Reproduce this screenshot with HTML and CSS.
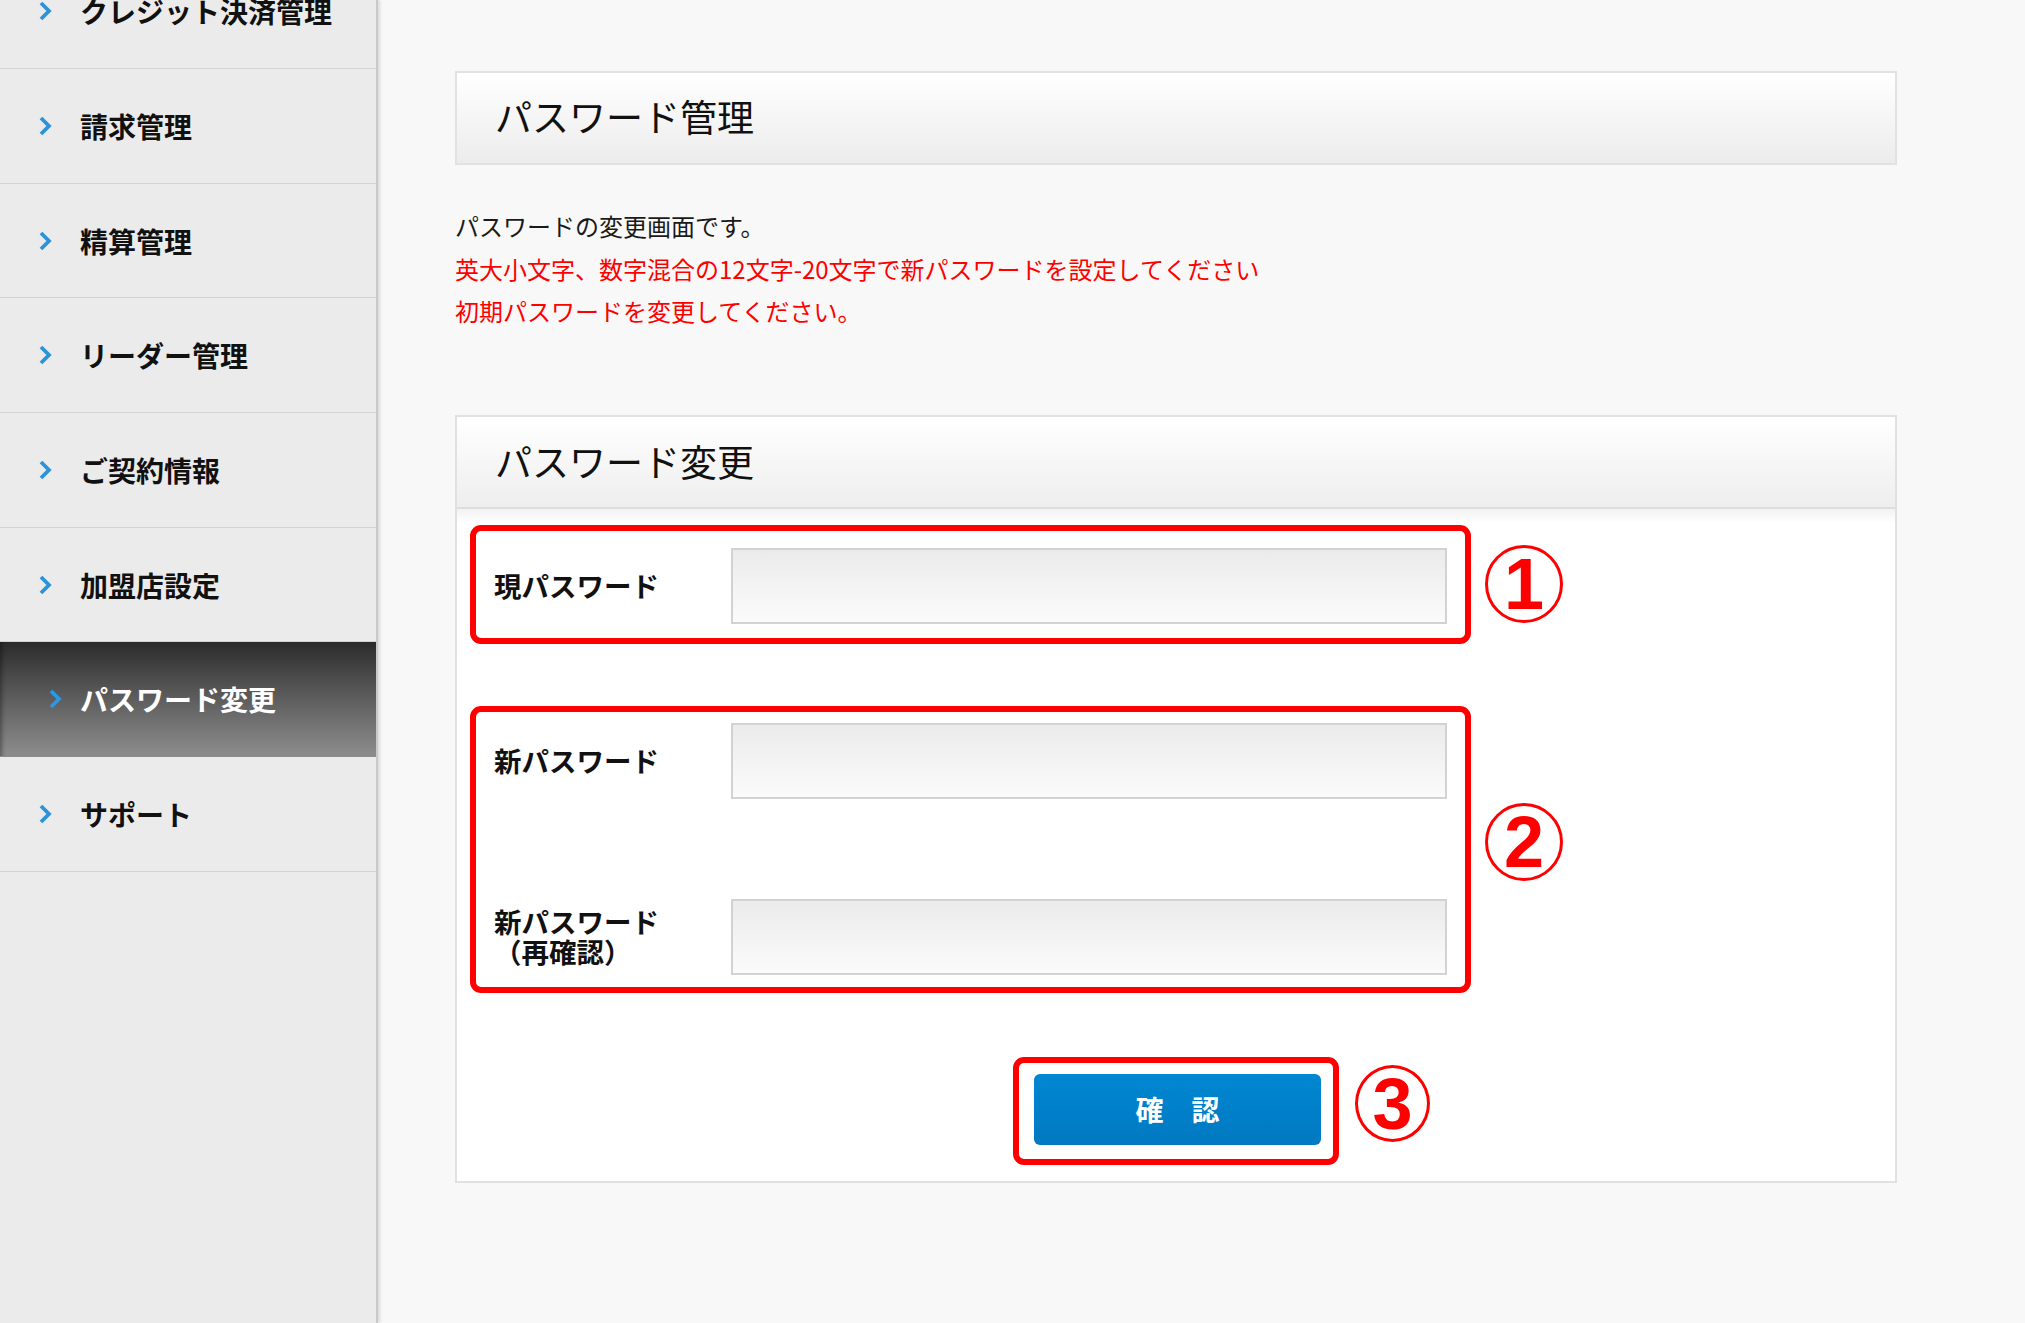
FILE: index.html
```html
<!DOCTYPE html>
<html lang="ja">
<head>
<meta charset="utf-8">
<title>パスワード変更</title>
<link rel="stylesheet" href="styles.css">
</head>
<body>
<div class="page">
  <nav class="sidebar">
    <ul class="menu">
      <li><a class="menu-link" href="#"><svg class="chev" viewBox="0 0 14 22"><polyline points="3,3 11,11 3,19"/></svg><span>クレジット決済管理</span></a></li>
      <li><a class="menu-link" href="#"><svg class="chev" viewBox="0 0 14 22"><polyline points="3,3 11,11 3,19"/></svg><span>請求管理</span></a></li>
      <li><a class="menu-link" href="#"><svg class="chev" viewBox="0 0 14 22"><polyline points="3,3 11,11 3,19"/></svg><span>精算管理</span></a></li>
      <li><a class="menu-link" href="#"><svg class="chev" viewBox="0 0 14 22"><polyline points="3,3 11,11 3,19"/></svg><span>リーダー管理</span></a></li>
      <li><a class="menu-link" href="#"><svg class="chev" viewBox="0 0 14 22"><polyline points="3,3 11,11 3,19"/></svg><span>ご契約情報</span></a></li>
      <li><a class="menu-link" href="#"><svg class="chev" viewBox="0 0 14 22"><polyline points="3,3 11,11 3,19"/></svg><span>加盟店設定</span></a></li>
      <li><a class="menu-link is-active" href="#"><svg class="chev" viewBox="0 0 14 22"><polyline points="3,3 11,11 3,19"/></svg><span>パスワード変更</span></a></li>
      <li><a class="menu-link" href="#"><svg class="chev" viewBox="0 0 14 22"><polyline points="3,3 11,11 3,19"/></svg><span>サポート</span></a></li>
    </ul>
  </nav>

  <main class="main">
    <div class="page-title"><h1>パスワード管理</h1></div>

    <div class="intro">
      <p>パスワードの変更画面です。</p>
      <p class="warn">英大小文字、数字混合の12文字-20文字で新パスワードを設定してください</p>
      <p class="warn">初期パスワードを変更してください。</p>
    </div>

    <section class="panel">
      <h2 class="panel-head">パスワード変更</h2>
      <div class="panel-body">
        <div class="note-row">
          <div class="mark mark-one">
            <div class="field-row">
              <label class="field-label">現パスワード</label>
              <input class="field" type="password">
            </div>
          </div>
          <span class="num">1</span>
        </div>

        <div class="note-row note-row-two">
          <div class="mark mark-two">
            <div class="field-row">
              <label class="field-label">新パスワード</label>
              <input class="field" type="password">
            </div>
            <div class="field-row">
              <label class="field-label">新パスワード<br>（再確認）</label>
              <input class="field" type="password">
            </div>
          </div>
          <span class="num num-up">2</span>
        </div>

        <div class="submit-row">
          <div class="mark mark-three">
            <button class="btn" type="button">確　認</button>
          </div>
          <span class="num num-up num-three">3</span>
        </div>
      </div>
    </section>
  </main>
</div>
</body>
</html>
```

FILE: styles.css
```css
* { box-sizing: border-box; }

html, body {
  margin: 0;
  padding: 0;
}

body {
  font-family: "Noto Sans CJK JP", "Noto Sans", sans-serif;
  background: #f8f8f8;
  color: #1a1a1a;
}

.page {
  display: flex;
  min-height: 100vh;
  overflow: hidden;
}

/* ---------- sidebar ---------- */
.sidebar {
  width: 378px;
  flex: none;
  background: #ebebeb;
  border-right: 2px solid #c9c9c9;
  box-shadow: 2px 0 3px rgba(0, 0, 0, 0.12);
  overflow: hidden;
}

.menu {
  list-style: none;
  margin: -45.7px 0 0;
  padding: 0;
}

.menu-link {
  display: flex;
  align-items: center;
  height: 114.7px;
  padding-left: 38px;
  border-bottom: 1px solid #d3d3d3;
  color: #111;
  text-decoration: none;
  font-size: 28px;
  font-weight: 700;
  line-height: 1;
}

.chev {
  width: 14px;
  height: 22px;
  flex: none;
  margin-right: 28px;
  fill: none;
  stroke: #2d93d8;
  stroke-width: 3.8;
  stroke-linejoin: miter;
}

.menu-link.is-active {
  padding-left: 48px;
  color: #fff;
  background: linear-gradient(#2b2b2b 0%, #4f4f4f 35%, #8d8d8d 100%);
  border-bottom-color: #8d8d8d;
  box-shadow: inset 5px 0 4px -3px rgba(0, 0, 0, 0.35);
}

.menu-link.is-active .chev {
  margin-right: 18px;
  stroke: #2a98e6;
}

/* ---------- main ---------- */
.main {
  flex: 1;
  padding: 71px 128px 0 77px;
}

.page-title {
  border: 2px solid #e2e2e2;
  background: linear-gradient(#ffffff, #ececec);
}

.page-title h1,
.panel-head {
  margin: 0;
  height: 90px;
  padding: 0 0 4px 38px;
  display: flex;
  align-items: center;
  font-size: 37px;
  font-weight: 400;
  color: #111;
  letter-spacing: 0;
}

.intro {
  margin-top: 40px;
  font-size: 24px;
  line-height: 42.5px;
  color: #1a1a1a;
}

.intro p {
  margin: 0;
}

.intro .warn {
  color: #ff0000;
}

.panel {
  margin-top: 82px;
  border: 2px solid #e1e1e1;
  background: #fff;
}

.panel-head {
  padding-bottom: 2px;
  background: linear-gradient(#ffffff, #eeeeee);
  border-bottom: 2px solid #dddddd;
  height: 92px;
}

.panel-body {
  padding: 16px 0 16px;
  background: linear-gradient(#f2f2f2, #ffffff 14px);
}

.note-row {
  display: flex;
  align-items: center;
  margin-left: 13px;
}

.note-row-two {
  margin-top: 62px;
}

.mark {
  border: 6px solid #ff0000;
  border-radius: 11px;
}

.mark-one {
  width: 1001px;
  padding: 17px 18px 14px;
}

.mark-two {
  width: 1001px;
  padding: 11px 18px 12px;
  display: flex;
  flex-direction: column;
  gap: 100px;
}

.field-row {
  display: flex;
  align-items: center;
}

.field-label {
  width: 237px;
  flex: none;
  font-size: 27.5px;
  font-weight: 700;
  line-height: 1.08;
  color: #111;
}

.field {
  width: 716px;
  height: 76px;
  border: 2px solid #d2d2d2;
  border-radius: 0;
  background: linear-gradient(#ebebeb, #fbfbfb);
  margin: 0;
  padding: 0 12px;
  font-size: 24px;
}

.num {
  width: 78px;
  height: 78px;
  flex: none;
  margin-left: 14px;
  border: 3px solid #ff0000;
  border-radius: 50%;
  display: flex;
  align-items: center;
  justify-content: center;
  font-family: "Liberation Sans", Arial, sans-serif;
  font-size: 72px;
  font-weight: 700;
  line-height: 1;
  color: #ff0000;
}

.num-up {
  margin-bottom: 14px;
}

.submit-row {
  margin-top: 64px;
  display: grid;
  grid-template-columns: 1fr auto 1fr;
  align-items: center;
}

.mark-three {
  grid-column: 2;
  padding: 11px 12px 14px 15px;
}

.num-three {
  grid-column: 3;
  justify-self: start;
  width: 75px;
  height: 77px;
  margin-left: 16px;
}

.btn {
  display: block;
  width: 287px;
  height: 71px;
  border: none;
  border-radius: 6px;
  background: linear-gradient(#0087d2, #0079c1);
  color: #fff;
  font-family: "Noto Sans CJK JP", sans-serif;
  font-size: 28px;
  font-weight: 700;
  line-height: 1;
  padding: 0;
}
```
